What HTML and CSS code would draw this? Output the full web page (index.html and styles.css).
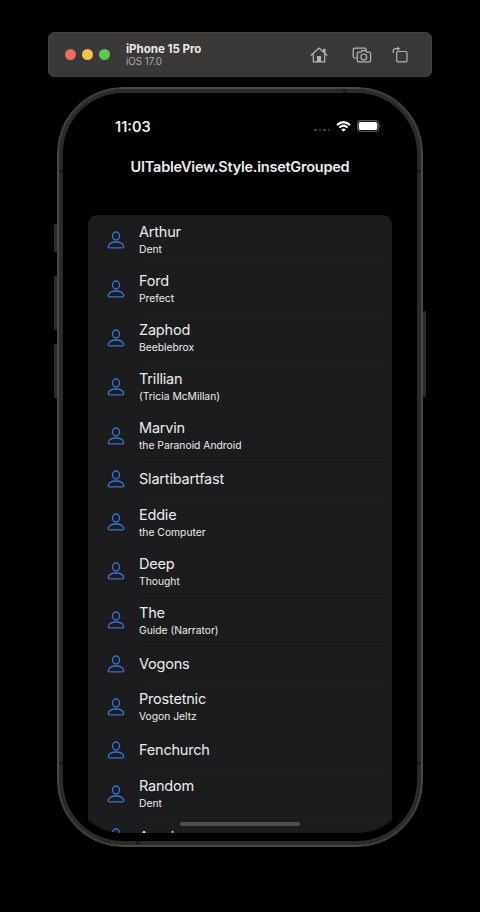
FILE: index.html
```html
<!DOCTYPE html>
<html lang="en">
<head>
<meta charset="utf-8">
<title>Simulator</title>
<link rel="stylesheet" href="styles.css">
</head>
<body>
<svg class="defs" width="0" height="0"><symbol id="person" viewBox="0 0 18 20"><ellipse cx="9" cy="6" rx="3.500" ry="4"/><path d="M2.800 17.900h12.400c1.200 0 1.800-.7 1.500-1.700-.7-2.400-3.700-4.200-7.700-4.200s-7 1.800-7.700 4.200c-.3 1 .3 1.700 1.500 1.700z"/></symbol></svg>
<header class="toolbar">
  <div class="lights"><i class="red"></i><i class="yellow"></i><i class="green"></i></div>
  <div class="device"><strong>iPhone 15 Pro</strong><span>iOS 17.0</span></div>
  <nav class="tools">
    <svg width="18" height="18" viewBox="0 0 18 18"><path d="M1 9.200 9 2l8 7.200M3.300 8v7.900h11.400V8M13.700 5.700V3.300h1.200V7"/><path class="solid" d="M7 10h4v6H7z"/></svg>
    <svg width="20" height="18" viewBox="0 0 20 18"><path d="M5 12H2.700Q1.200 12 1.200 10.500V3.700Q1.200 2.200 2.700 2.200H12.500Q14 2.200 14 3.700V4"/><path d="M6.700 6.200h2l1-1.600h4.200l1 1.600h2.300q1.400 0 1.400 1.400v6.800q0 1.400-1.400 1.400H6.700q-1.400 0-1.400-1.400V7.600q0-1.400 1.400-1.400z"/><circle cx="11.800" cy="10.900" r="2.900"/></svg>
    <svg width="18" height="18" viewBox="0 0 18 18"><rect x="4.700" y="5.500" width="10.300" height="10.300" rx="1.300"/><path d="M1.200 6.500V5.200q0-2.500 2.500-2.500H6"/><path class="solid" d="m5.200.6 3 2.100-3 2.100z"/></svg>
  </nav>
</header>
<main class="phone">
  <i class="key action"></i><i class="key up"></i><i class="key down"></i><i class="key power"></i>
  <i class="seam top"></i><i class="seam bottom"></i><i class="seam left-top"></i><i class="seam left-bottom"></i><i class="seam right-top"></i><i class="seam right-bottom"></i>
  <div class="screen">
    <div class="status">
      <span class="clock">11:03</span>
      <span class="dots"><i></i><i></i><i></i><i></i></span>
      <svg class="wifi" width="15" height="11" viewBox="0 0 15 11"><path d="M1 4.100Q7.500-1.900 14 4.100M3.300 6.500Q7.500 2.800 11.700 6.500"/><path class="tip" d="M5.200 8.400Q7.500 6.600 9.800 8.400L7.500 10.700z"/></svg>
      <svg class="battery" width="24" height="12" viewBox="0 0 24 12"><rect class="case" x=".6" y=".6" width="20.800" height="10.800" rx="3.200"/><rect class="charge" x="1.700" y="1.900" width="18.600" height="8.200" rx="2.200"/><path class="cap" d="M22.400 4v4q1.300-.6 1.300-2t-1.300-2z"/></svg>
    </div>
    <h1>UITableView.Style.insetGrouped</h1>
    <ul class="table">
      <li><svg><use href="#person"/></svg><div><b>Arthur</b><small>Dent</small></div></li>
      <li><svg><use href="#person"/></svg><div><b>Ford</b><small>Prefect</small></div></li>
      <li><svg><use href="#person"/></svg><div><b>Zaphod</b><small>Beeblebrox</small></div></li>
      <li><svg><use href="#person"/></svg><div><b>Trillian</b><small>(Tricia McMillan)</small></div></li>
      <li><svg><use href="#person"/></svg><div><b>Marvin</b><small>the Paranoid Android</small></div></li>
      <li class="single"><svg><use href="#person"/></svg><div><b>Slartibartfast</b></div></li>
      <li><svg><use href="#person"/></svg><div><b>Eddie</b><small>the Computer</small></div></li>
      <li><svg><use href="#person"/></svg><div><b>Deep</b><small>Thought</small></div></li>
      <li><svg><use href="#person"/></svg><div><b>The</b><small>Guide (Narrator)</small></div></li>
      <li class="single"><svg><use href="#person"/></svg><div><b>Vogons</b></div></li>
      <li><svg><use href="#person"/></svg><div><b>Prostetnic</b><small>Vogon Jeltz</small></div></li>
      <li class="single"><svg><use href="#person"/></svg><div><b>Fenchurch</b></div></li>
      <li><svg><use href="#person"/></svg><div><b>Random</b><small>Dent</small></div></li>
      <li class="single"><svg><use href="#person"/></svg><div><b>Agrajag</b></div></li>
    </ul>
    <i class="home"></i>
  </div>
</main>
</body>
</html>
```

FILE: styles.css
```css
* { box-sizing: border-box; }
body { margin: 0; height: 912px; overflow: hidden; background: #000; color: #ececec; font-family: Inter, "Liberation Sans", sans-serif; }
.defs { position: absolute; }
.toolbar { display: flex; align-items: center; width: 384px; height: 45px; margin: 32px 0 0 48px; padding: 0 22px 0 17px; border-radius: 7px; background: #3a3938; box-shadow: inset 0 0 0 1px #444342; }
.lights { display: flex; gap: 6.200px; }
.lights i { width: 11px; height: 11px; border-radius: 50%; }
.red { background: #ed6b60; }
.yellow { background: #f4bf4f; }
.green { background: #61c555; }
.device { display: flex; flex-direction: column; margin: 1px 0 0 15.600px; }
.device strong { font-size: 11.500px; line-height: 13px; font-weight: 700; }
.device span { font-size: 9.800px; line-height: 12px; color: #aaa9a8; }
.tools { display: flex; align-items: center; margin-left: auto; }
.tools svg { fill: none; stroke: #b5b4b3; stroke-width: 1.200; stroke-linejoin: round; stroke-linecap: round; }
.tools svg + svg { margin-left: 24px; }
.tools svg:last-child { margin-left: 20px; }
.tools .solid { fill: #b5b4b3; stroke: none; }
.phone { position: relative; width: 366px; height: 760px; margin: 10px 0 0 57px; padding: 14px; border: 1px solid #484848; border-radius: 66px; background: #000; box-shadow: inset 0 0 0 1px #484848, inset 0 0 0 5px #2b2b2b; }
.key { position: absolute; width: 3px; background: #2b2b2b; border-radius: 1px; }
.action { left: -4px; top: 136px; height: 28px; }
.up { left: -4px; top: 188px; height: 54px; }
.down { left: -4px; top: 256px; height: 54px; }
.power { right: -4px; top: 223px; height: 86px; }
.seam { position: absolute; width: 4px; height: 4px; background: #1d1d1d; }
.top { left: 285px; top: 1px; }
.bottom { left: 78px; bottom: 1px; }
.left-top { left: 1px; top: 81px; }
.left-bottom { left: 1px; bottom: 81px; }
.right-top { right: 1px; top: 81px; }
.right-bottom { right: 1px; bottom: 81px; }
.screen { position: relative; width: 336px; height: 731px; overflow: hidden; border-radius: 50px; }
.status { display: flex; align-items: center; height: 20px; margin-top: 14px; padding: 0 27px 0 43px; }
.clock { font-size: 14.500px; font-weight: 600; }
.dots { display: flex; gap: 2px; margin: 8px 6px 0 auto; }
.dots i { width: 2.500px; height: 2.500px; border-radius: 50%; background: #444; }
.wifi { fill: none; stroke: #fff; stroke-width: 2; }
.wifi .tip { fill: #fff; stroke: none; }
.battery { margin-left: 6px; }
.case { fill: none; stroke: #555; stroke-width: 1.200; }
.charge { fill: #fff; }
.cap { fill: #555; }
h1 { margin: 21px 0 38px; font-size: 14.500px; line-height: 20px; font-weight: 600; text-align: center; letter-spacing: -.24px; white-space: nowrap; }
.table { margin: 0 16px; padding: 0; list-style: none; background: #1c1c1e; border-radius: 9px; }
li { display: flex; align-items: center; height: 49px; padding-left: 19px; }
li svg { width: 18px; height: 20px; margin-right: 14px; fill: none; stroke: #3873cf; stroke-width: 1.350; }
li.single { height: 37.700px; }
li div { flex: 1; display: flex; flex-direction: column; justify-content: center; height: 100%; margin-right: 8px; border-bottom: 1px solid #1f1f21; }
b { font-size: 14.500px; line-height: 19px; font-weight: 400; letter-spacing: -.2px; }
small { font-size: 10.300px; line-height: 16px; }
li:not(.single) div { padding-top: 1px; }
.home { position: absolute; left: 108px; bottom: 7px; width: 120px; height: 4px; border-radius: 2px; background: #505051; }
```
